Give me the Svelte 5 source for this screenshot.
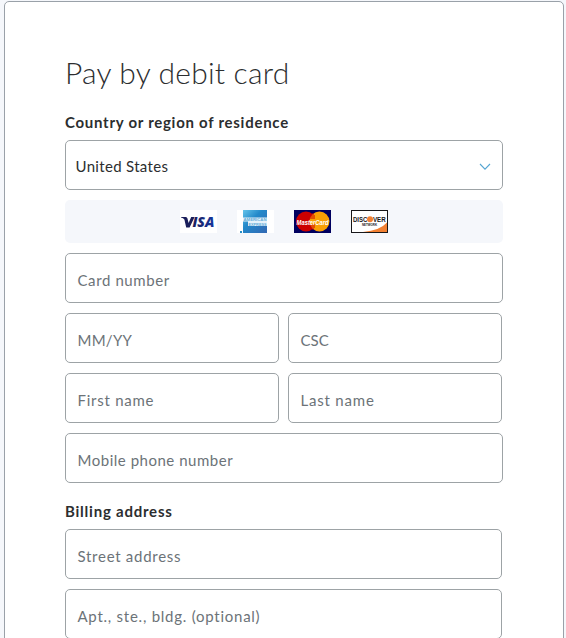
<script lang="ts">
	interface Field {
		id: string;
		label: string;
		tracking: number;
	}

	// tracking is the letter spacing of each floating label, in px
	const cardRows: Field[][] = [
		[{ id: 'number', label: 'Card number', tracking: 0.6 }],
		[
			{ id: 'expiry', label: 'MM/YY', tracking: 0.25 },
			{ id: 'csc', label: 'CSC', tracking: 0 }
		],
		[
			{ id: 'first', label: 'First name', tracking: 0.75 },
			{ id: 'last', label: 'Last name', tracking: 0.8 }
		],
		[{ id: 'phone', label: 'Mobile phone number', tracking: 0.52 }]
	];

	const billingRows: Field[] = [
		{ id: 'street', label: 'Street address', tracking: 0.72 },
		{ id: 'apt', label: 'Apt., ste., bldg. (optional)', tracking: 0.75 }
	];
</script>

{#snippet field(item: Field)}
	<div class="field">
		<span class="field-label" style="letter-spacing: {item.tracking}px">{item.label}</span>
	</div>
{/snippet}

<main class="panel">
	<h1>Pay by debit card</h1>

	<h2 class="country-title">Country or region of residence</h2>
	<div class="select">
		<span>United States</span>
		<svg class="chevron" width="12" height="8" viewBox="0 0 12 8" aria-hidden="true">
			<path d="M1 1 6 6.2 11 1" fill="none" stroke="#55a5d2" stroke-width="1.1" />
		</svg>
	</div>

	<div class="brands">
		<svg width="37" height="23" viewBox="0 0 37 23" role="img" aria-label="Visa">
			<defs>
				<linearGradient id="visa-ink">
					<stop offset="0" stop-color="#1b1f5b" />
					<stop offset="1" stop-color="#15369f" />
				</linearGradient>
			</defs>
			<rect width="37" height="23" fill="#fff" />
			<path d="M1 7h5.2l1.2 1.2L8.6 13 11.2 7h3.4L9.6 17.4H6.2L4.4 9.5Q3.4 8 1 7.6z" fill="#1b1f5b" />
			<text class="visa" x="12.4" y="17.4" textLength="22" lengthAdjust="spacingAndGlyphs" fill="url(#visa-ink)">ISA</text>
		</svg>

		<svg width="37" height="23" viewBox="0 0 37 23" role="img" aria-label="American Express">
			<defs>
				<linearGradient id="amex-blue" x1="0" y1="0" x2="1" y2="1">
					<stop offset="0" stop-color="#65c4ea" />
					<stop offset=".4" stop-color="#2389ca" />
					<stop offset="1" stop-color="#3268b3" />
				</linearGradient>
			</defs>
			<rect width="37" height="23" fill="#fff" />
			<path d="M6 0h24v23H6z" fill="url(#amex-blue)" />
			<path d="M6 7.4h24v4.2H6zM11 11.6h19v4.4H11z" fill="#e6f2fa" />
			<text class="amex" x="6.5" y="11" textLength="23" lengthAdjust="spacingAndGlyphs">AMERICAN</text>
			<text class="amex" x="11.5" y="15.5" textLength="18" lengthAdjust="spacingAndGlyphs">EXPRESS</text>
			<rect x="3" y="21" width="2" height="2" fill="#278fc6" />
		</svg>

		<svg width="37" height="23" viewBox="0 0 37 23" role="img" aria-label="MasterCard">
			<rect width="37" height="23" fill="#00005f" />
			<circle cx="12" cy="11.5" r="10" fill="#cc0001" />
			<circle cx="25.5" cy="11.5" r="10" fill="#f99f04" />
			<path d="M17 6h4M16 8h5M16 15h5M17 17h4M18 19h2M18 4h2" stroke="#cc0001" stroke-width="1" />
			<text class="mastercard" x="2.6" y="14.6" textLength="32" lengthAdjust="spacingAndGlyphs">MasterCard</text>
		</svg>

		<svg width="37" height="23" viewBox="0 0 37 23" role="img" aria-label="Discover Network">
			<rect x=".5" y=".5" width="36" height="22" fill="#fff" />
			<path d="M12 22Q29 20.5 36 12.5V22z" fill="#f28032" />
			<rect x=".5" y=".5" width="36" height="22" fill="none" stroke="#171719" />
			<text class="discover" x="2" y="12" textLength="14.3" lengthAdjust="spacingAndGlyphs">DISC</text>
			<circle cx="19" cy="9.2" r="3" fill="#f28032" />
			<text class="discover" x="22" y="12" textLength="12.7" lengthAdjust="spacingAndGlyphs">VER</text>
			<text class="network" x="11" y="15.8" textLength="15" lengthAdjust="spacingAndGlyphs">NETWORK</text>
		</svg>
	</div>

	<div class="rows">
		{#each cardRows as row}
			<div class="row" class:split={row.length > 1}>
				{#each row as item (item.id)}
					{@render field(item)}
				{/each}
			</div>
		{/each}
	</div>

	<h2 class="billing-title">Billing address</h2>
	<div class="rows billing">
		{#each billingRows as item (item.id)}
			{@render field(item)}
		{/each}
	</div>
</main>

<style>
	:global(body) {
		background: #f5f7fb;
		height: 638px;
		overflow: hidden;
	}

	.panel {
		box-sizing: border-box;
		width: 560px;
		height: 660px;
		margin: 1px 0 0 4px;
		padding: 51px 60px 0;
		border: 1px solid #9aa1a9;
		border-radius: 5px;
		background: #fff;
		font-family: Lato, 'Liberation Sans', sans-serif;
		color: #2c2e2f;
	}

	h1 {
		margin: 0;
		font-size: 30px;
		line-height: 38px;
		font-weight: 300;
		letter-spacing: 0.2px;
		white-space: nowrap;
	}

	h2 {
		margin: 0;
		font-size: 15px;
		line-height: 20px;
		font-weight: 700;
		white-space: nowrap;
	}

	.country-title {
		margin-top: 21px;
		letter-spacing: 0.73px;
	}

	.select {
		box-sizing: border-box;
		display: flex;
		align-items: center;
		justify-content: space-between;
		width: 438px;
		height: 50px;
		margin-top: 8px;
		padding: 1px 11px 0 9.5px;
		border: 1px solid #9da3a6;
		border-radius: 5px;
		font-size: 15px;
		letter-spacing: 0.32px;
	}

	.chevron {
		margin-top: 3px;
	}

	.brands {
		display: flex;
		align-items: center;
		justify-content: center;
		gap: 20px;
		width: 438px;
		height: 43px;
		margin: 10px 0;
		border-radius: 5px;
		background: #f5f7fb;
	}

	.brands svg {
		overflow: visible;
	}

	.rows {
		display: flex;
		flex-direction: column;
		gap: 10px;
		width: 438px;
	}

	.row {
		display: flex;
		gap: 9px;
	}

	.split {
		width: 437px;
	}

	.field {
		box-sizing: border-box;
		display: flex;
		flex: 1;
		align-items: center;
		height: 50px;
		padding: 3px 11.5px 0;
		border: 1px solid #9da3a6;
		border-radius: 5px;
		background: #fff;
	}

	.field-label {
		font-size: 15px;
		line-height: 20px;
		color: #6c7378;
		white-space: nowrap;
	}

	.billing-title {
		margin-top: 18px;
		letter-spacing: 0.77px;
	}

	.billing {
		width: 437px;
		margin-top: 8px;
	}

	.billing .field {
		flex: none;
	}

	.visa {
		font: italic 900 14px 'Open Sans', sans-serif;
	}

	.amex {
		font: 700 3.8px 'Liberation Sans', sans-serif;
		fill: #62acd8;
	}

	.mastercard {
		font: italic 700 8px 'Liberation Sans', sans-serif;
		fill: #fff;
	}

	.discover {
		font: 700 8px 'Liberation Sans', sans-serif;
		fill: #171719;
	}

	.network {
		font: 700 3px 'Liberation Sans', sans-serif;
		fill: #171719;
	}
</style>
